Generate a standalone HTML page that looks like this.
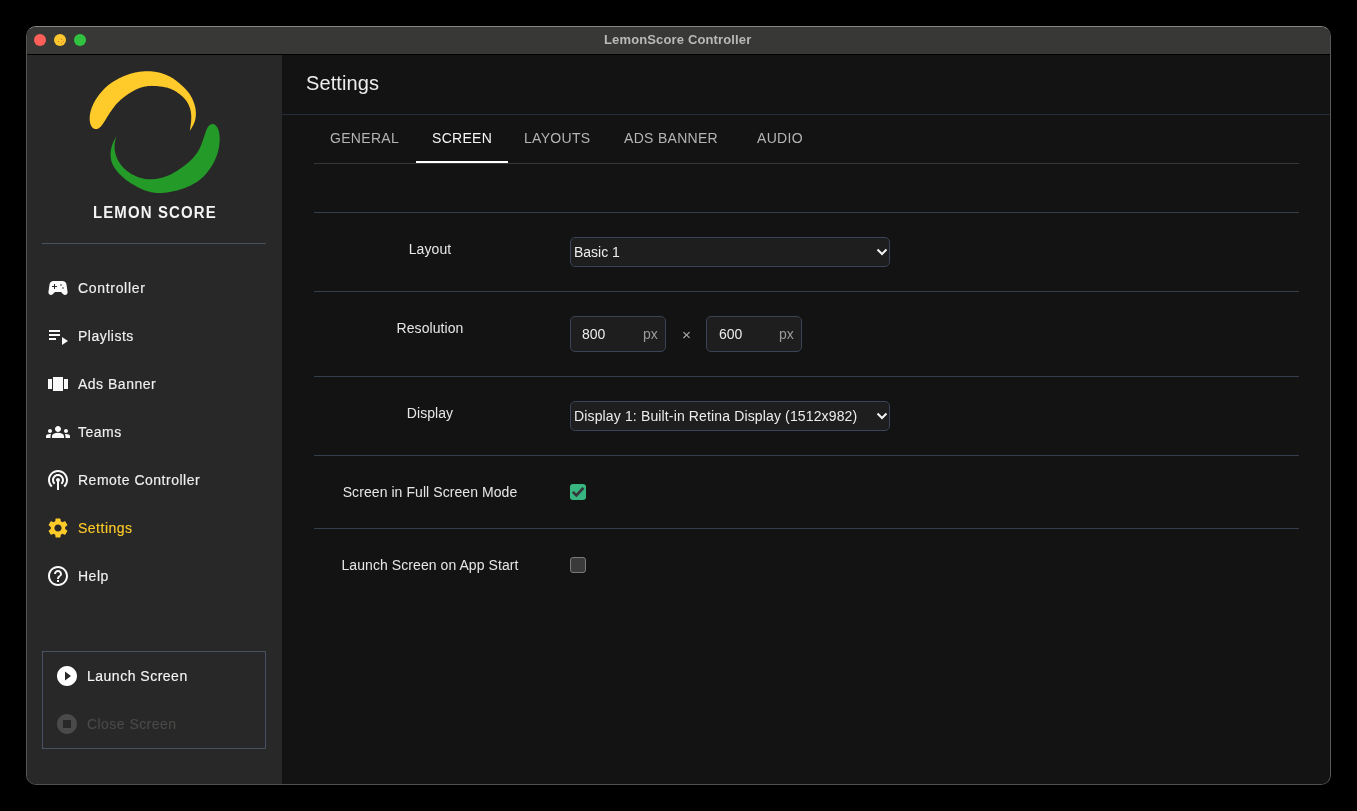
<!DOCTYPE html>
<html><head><meta charset="utf-8">
<style>
html,body{margin:0;padding:0;width:1357px;height:811px;background:#000;overflow:hidden;font-family:"Liberation Sans",sans-serif;}
.abs{position:absolute;}
#win{position:absolute;left:26px;top:26px;width:1303px;height:757px;border:1px solid #575757;border-top-color:#868686;border-bottom-color:#505050;border-radius:10px;overflow:hidden;background:#131313;}
#title{position:absolute;left:0;top:0;width:1303px;height:27px;background:#383837;border-bottom:1px solid #000;}
.dot{position:absolute;top:7px;width:12px;height:12px;border-radius:50%;}
#side{position:absolute;left:0;top:28px;width:255px;height:729px;background:#282828;}
#main{position:absolute;left:255px;top:28px;width:1048px;height:729px;background:#131313;}
.t{position:absolute;white-space:nowrap;line-height:1;will-change:transform;}
.nav{position:absolute;left:51px;font-size:14px;color:#f0f0f0;letter-spacing:0.5px;-webkit-text-stroke:0.15px currentColor;}
.ico{position:absolute;width:24px;height:24px;}
.hl{position:absolute;height:1px;}
.tab{position:absolute;top:76px;font-size:14px;color:#b4b4b4;letter-spacing:0.3px;}
.lbl{position:absolute;font-size:14px;color:#e6e6e6;text-align:center;width:300px;letter-spacing:0.07px;}
.box{position:absolute;box-sizing:border-box;border:1px solid #394456;background:#1e1e1e;border-radius:5px;}
.val{position:absolute;font-size:14px;color:#ececec;}
</style></head><body>
<div id="win">
  <div id="title">
    <div class="dot" style="left:7px;background:#fc5f5a;"></div>
    <div class="dot" style="left:27px;background:#fdc82e;"></div><div class="abs" style="left:33.5px;top:11.5px;width:1px;height:1px;background:#e86b3a;"></div><div class="abs" style="left:30.5px;top:13.5px;width:1px;height:1px;background:#e86b3a;"></div><div class="abs" style="left:35.5px;top:13.5px;width:1px;height:1px;background:#e86b3a;"></div><div class="abs" style="left:33.5px;top:15.5px;width:1px;height:1px;background:#e86b3a;"></div>
    <div class="dot" style="left:47px;background:#31c23e;"></div>
    <div class="t" style="left:576.5px;top:6px;font-size:13px;font-weight:bold;color:#b9b9b9;letter-spacing:0.14px;">LemonScore Controller</div>
  </div>
  <div id="side">
    <!-- logo -->
    <svg class="abs" style="left:0;top:0" width="255" height="200" viewBox="27 55 255 200">
      <path fill="#fecb2a" d="M189.70 131.10 L190.29 130.11 L190.82 129.26 L191.33 128.46 L191.82 127.64 L192.31 126.81 L192.78 125.94 L193.23 125.06 L193.65 124.16 L194.05 123.25 L194.41 122.32 L194.73 121.38 L195.01 120.42 L195.25 119.45 L195.45 118.48 L195.61 117.50 L195.73 116.51 L195.82 115.52 L195.87 114.52 L195.89 113.52 L195.87 112.53 L195.81 111.53 L195.72 110.54 L195.59 109.55 L195.44 108.57 L195.25 107.58 L195.04 106.61 L194.80 105.64 L194.53 104.68 L194.24 103.72 L193.92 102.78 L193.58 101.84 L193.22 100.91 L192.83 99.99 L192.43 99.07 L192.00 98.17 L191.54 97.28 L191.07 96.41 L190.56 95.54 L190.04 94.70 L189.49 93.86 L188.91 93.05 L188.31 92.25 L187.69 91.47 L187.04 90.71 L186.38 89.97 L185.70 89.23 L185.00 88.51 L184.30 87.80 L183.58 87.11 L182.86 86.42 L182.13 85.73 L181.39 85.06 L180.65 84.39 L179.90 83.73 L179.14 83.07 L178.38 82.43 L177.61 81.79 L176.82 81.17 L176.03 80.56 L175.23 79.96 L174.41 79.38 L173.59 78.82 L172.75 78.28 L171.89 77.76 L171.03 77.27 L170.15 76.79 L169.26 76.33 L168.36 75.90 L167.46 75.48 L166.54 75.08 L165.61 74.70 L164.68 74.34 L163.74 74.00 L162.80 73.68 L161.85 73.37 L160.89 73.09 L159.92 72.82 L158.96 72.58 L157.98 72.35 L157.00 72.15 L156.02 71.97 L155.04 71.81 L154.05 71.67 L153.05 71.55 L152.06 71.45 L151.06 71.37 L150.07 71.31 L149.07 71.28 L148.07 71.26 L147.07 71.26 L146.07 71.28 L145.07 71.31 L144.07 71.36 L143.07 71.43 L142.08 71.52 L141.08 71.62 L140.09 71.73 L139.10 71.87 L138.11 72.01 L137.12 72.18 L136.14 72.36 L135.16 72.56 L134.18 72.77 L133.21 73.01 L132.24 73.26 L131.28 73.53 L130.32 73.81 L129.37 74.11 L128.42 74.43 L127.48 74.76 L126.54 75.11 L125.61 75.46 L124.68 75.83 L123.75 76.22 L122.83 76.61 L121.92 77.01 L121.01 77.43 L120.10 77.85 L119.20 78.29 L118.31 78.74 L117.42 79.20 L116.54 79.67 L115.67 80.16 L114.80 80.66 L113.94 81.17 L113.09 81.70 L112.26 82.24 L111.43 82.81 L110.61 83.38 L109.81 83.98 L109.02 84.59 L108.24 85.22 L107.48 85.86 L106.72 86.52 L105.99 87.19 L105.26 87.87 L104.54 88.57 L103.84 89.28 L103.15 90.01 L102.47 90.74 L101.80 91.49 L101.15 92.24 L100.50 93.00 L99.87 93.78 L99.25 94.56 L98.64 95.36 L98.05 96.16 L97.46 96.97 L96.90 97.80 L96.35 98.63 L95.81 99.47 L95.29 100.33 L94.79 101.19 L94.31 102.07 L93.85 102.95 L93.40 103.85 L92.98 104.75 L92.57 105.66 L92.19 106.59 L91.82 107.52 L91.48 108.46 L91.17 109.40 L90.88 110.36 L90.61 111.32 L90.38 112.29 L90.18 113.27 L90.00 114.25 L89.87 115.24 L89.76 116.23 L89.70 117.22 L89.67 118.22 L89.68 119.21 L89.73 120.21 L89.83 121.19 L89.98 122.17 L90.18 123.14 L90.44 124.09 L90.78 125.00 L91.20 125.87 L91.71 126.68 L92.31 127.41 L92.99 128.04 L93.75 128.53 L94.57 128.88 L95.44 129.06 L96.33 129.07 L97.21 128.90 L98.07 128.58 L98.89 128.13 L99.65 127.56 L100.37 126.91 L101.05 126.19 L101.69 125.44 L102.30 124.65 L102.89 123.85 L103.46 123.03 L104.02 122.20 L104.57 121.36 L105.10 120.52 L105.63 119.67 L106.14 118.81 L106.66 117.95 L107.17 117.09 L107.69 116.24 L108.21 115.39 L108.74 114.54 L109.29 113.70 L109.84 112.86 L110.39 112.03 L110.96 111.21 L111.53 110.39 L112.12 109.57 L112.70 108.76 L113.30 107.96 L113.90 107.16 L114.52 106.37 L115.14 105.60 L115.78 104.83 L116.44 104.07 L117.10 103.33 L117.79 102.60 L118.49 101.88 L119.20 101.18 L119.93 100.50 L120.66 99.82 L121.42 99.16 L122.18 98.52 L122.95 97.88 L123.73 97.26 L124.52 96.65 L125.32 96.05 L126.13 95.46 L126.95 94.88 L127.77 94.31 L128.60 93.75 L129.44 93.21 L130.28 92.67 L131.13 92.15 L131.99 91.63 L132.86 91.14 L133.73 90.65 L134.62 90.19 L135.51 89.74 L136.42 89.31 L137.33 88.91 L138.25 88.53 L139.18 88.17 L140.12 87.84 L141.07 87.53 L142.03 87.25 L143.00 86.99 L143.97 86.76 L144.95 86.56 L145.93 86.38 L146.91 86.22 L147.90 86.10 L148.90 86.00 L149.89 85.93 L150.89 85.89 L151.89 85.87 L152.89 85.88 L153.89 85.91 L154.89 85.96 L155.88 86.02 L156.88 86.10 L157.88 86.20 L158.87 86.30 L159.86 86.41 L160.86 86.54 L161.85 86.67 L162.84 86.82 L163.82 86.99 L164.80 87.18 L165.78 87.38 L166.75 87.61 L167.72 87.87 L168.67 88.16 L169.61 88.48 L170.55 88.83 L171.47 89.21 L172.38 89.63 L173.27 90.07 L174.15 90.54 L175.02 91.03 L175.87 91.55 L176.71 92.09 L177.54 92.65 L178.36 93.23 L179.16 93.82 L179.95 94.43 L180.73 95.06 L181.49 95.71 L182.23 96.37 L182.96 97.05 L183.67 97.76 L184.35 98.49 L185.01 99.23 L185.64 100.01 L186.23 100.80 L186.80 101.62 L187.33 102.46 L187.83 103.33 L188.29 104.21 L188.73 105.11 L189.12 106.02 L189.49 106.95 L189.82 107.89 L190.12 108.84 L190.38 109.80 L190.60 110.77 L190.79 111.75 L190.95 112.73 L191.07 113.72 L191.16 114.72 L191.22 115.71 L191.25 116.71 L191.26 117.71 L191.24 118.71 L191.21 119.71 L191.15 120.70 L191.06 121.70 L190.96 122.69 L190.85 123.69 L190.72 124.68 L190.59 125.66 L190.45 126.62 L190.31 127.57 L190.17 128.51 L190.01 129.47 L189.82 130.51Z"/>
      <path fill="#249a28" d="M116.60 136.10 L116.03 137.10 L115.52 137.97 L115.04 138.79 L114.58 139.62 L114.13 140.47 L113.69 141.35 L113.27 142.25 L112.88 143.17 L112.51 144.10 L112.17 145.03 L111.86 145.98 L111.58 146.94 L111.34 147.91 L111.12 148.88 L110.94 149.86 L110.80 150.85 L110.69 151.84 L110.61 152.83 L110.57 153.83 L110.57 154.83 L110.60 155.82 L110.67 156.82 L110.77 157.81 L110.91 158.79 L111.09 159.77 L111.31 160.74 L111.58 161.70 L111.89 162.64 L112.25 163.57 L112.65 164.48 L113.09 165.37 L113.58 166.24 L114.09 167.09 L114.64 167.93 L115.20 168.75 L115.79 169.56 L116.40 170.35 L117.02 171.13 L117.66 171.90 L118.31 172.66 L118.98 173.41 L119.66 174.14 L120.35 174.86 L121.06 175.56 L121.78 176.26 L122.52 176.94 L123.26 177.60 L124.02 178.25 L124.79 178.89 L125.57 179.52 L126.36 180.13 L127.16 180.72 L127.98 181.31 L128.80 181.87 L129.63 182.43 L130.47 182.97 L131.32 183.50 L132.18 184.02 L133.04 184.53 L133.90 185.03 L134.77 185.53 L135.65 186.01 L136.52 186.49 L137.41 186.97 L138.29 187.43 L139.18 187.89 L140.08 188.33 L140.98 188.76 L141.89 189.18 L142.81 189.58 L143.73 189.96 L144.66 190.32 L145.60 190.66 L146.55 190.97 L147.51 191.27 L148.47 191.54 L149.43 191.79 L150.41 192.02 L151.38 192.22 L152.37 192.41 L153.35 192.57 L154.34 192.70 L155.34 192.82 L156.33 192.91 L157.33 192.97 L158.33 193.01 L159.32 193.03 L160.32 193.02 L161.32 192.99 L162.32 192.94 L163.32 192.87 L164.31 192.78 L165.31 192.68 L166.30 192.55 L167.29 192.42 L168.28 192.27 L169.27 192.10 L170.25 191.93 L171.24 191.74 L172.22 191.54 L173.20 191.34 L174.17 191.12 L175.15 190.89 L176.12 190.65 L177.09 190.40 L178.05 190.14 L179.01 189.87 L179.97 189.59 L180.93 189.29 L181.88 188.98 L182.83 188.66 L183.77 188.33 L184.71 187.98 L185.64 187.63 L186.57 187.25 L187.50 186.87 L188.41 186.47 L189.33 186.06 L190.23 185.64 L191.13 185.20 L192.03 184.75 L192.91 184.29 L193.79 183.81 L194.66 183.32 L195.52 182.81 L196.37 182.29 L197.21 181.74 L198.04 181.18 L198.85 180.60 L199.64 179.99 L200.42 179.37 L201.18 178.72 L201.93 178.06 L202.66 177.37 L203.37 176.67 L204.06 175.95 L204.74 175.22 L205.40 174.47 L206.05 173.71 L206.69 172.94 L207.32 172.16 L207.94 171.38 L208.55 170.58 L209.14 169.78 L209.73 168.97 L210.30 168.15 L210.87 167.32 L211.42 166.49 L211.95 165.64 L212.47 164.79 L212.97 163.92 L213.45 163.05 L213.92 162.16 L214.37 161.27 L214.80 160.37 L215.21 159.46 L215.61 158.54 L215.99 157.61 L216.35 156.68 L216.69 155.74 L217.02 154.80 L217.32 153.85 L217.61 152.89 L217.89 151.93 L218.14 150.96 L218.38 149.99 L218.59 149.01 L218.79 148.03 L218.97 147.05 L219.13 146.06 L219.27 145.07 L219.40 144.08 L219.50 143.09 L219.58 142.09 L219.64 141.09 L219.67 140.09 L219.68 139.10 L219.66 138.10 L219.63 137.10 L219.56 136.10 L219.47 135.11 L219.36 134.12 L219.22 133.13 L219.04 132.15 L218.82 131.18 L218.54 130.23 L218.21 129.30 L217.82 128.40 L217.35 127.54 L216.82 126.73 L216.22 125.98 L215.54 125.32 L214.81 124.76 L214.01 124.36 L213.18 124.12 L212.32 124.07 L211.47 124.22 L210.64 124.53 L209.85 125.01 L209.13 125.60 L208.47 126.29 L207.88 127.06 L207.37 127.89 L206.92 128.76 L206.52 129.66 L206.16 130.59 L205.83 131.53 L205.50 132.47 L205.18 133.42 L204.87 134.37 L204.55 135.32 L204.24 136.27 L203.92 137.22 L203.61 138.17 L203.29 139.12 L202.96 140.07 L202.63 141.01 L202.29 141.95 L201.95 142.89 L201.59 143.83 L201.23 144.76 L200.85 145.68 L200.46 146.60 L200.05 147.52 L199.62 148.42 L199.17 149.31 L198.69 150.18 L198.18 151.04 L197.65 151.89 L197.10 152.72 L196.52 153.54 L195.93 154.34 L195.32 155.13 L194.70 155.91 L194.06 156.68 L193.41 157.44 L192.74 158.19 L192.06 158.92 L191.37 159.64 L190.66 160.35 L189.94 161.04 L189.21 161.72 L188.47 162.39 L187.71 163.04 L186.94 163.68 L186.16 164.31 L185.37 164.93 L184.58 165.53 L183.78 166.13 L182.97 166.72 L182.16 167.31 L181.34 167.88 L180.52 168.46 L179.69 169.03 L178.87 169.59 L178.04 170.14 L177.20 170.69 L176.36 171.23 L175.51 171.76 L174.65 172.28 L173.79 172.78 L172.92 173.27 L172.03 173.74 L171.14 174.20 L170.24 174.63 L169.33 175.05 L168.42 175.44 L167.49 175.82 L166.56 176.18 L165.62 176.52 L164.67 176.85 L163.72 177.15 L162.77 177.44 L161.80 177.71 L160.84 177.97 L159.86 178.20 L158.89 178.41 L157.90 178.60 L156.92 178.77 L155.93 178.91 L154.94 179.03 L153.95 179.13 L152.95 179.21 L151.95 179.27 L150.95 179.30 L149.95 179.30 L148.96 179.28 L147.96 179.23 L146.96 179.15 L145.97 179.05 L144.98 178.91 L144.00 178.74 L143.02 178.55 L142.05 178.32 L141.09 178.06 L140.13 177.78 L139.18 177.46 L138.24 177.13 L137.31 176.77 L136.38 176.39 L135.47 175.98 L134.56 175.56 L133.67 175.12 L132.78 174.66 L131.90 174.18 L131.04 173.68 L130.19 173.15 L129.35 172.61 L128.53 172.05 L127.72 171.46 L126.93 170.85 L126.15 170.22 L125.39 169.57 L124.66 168.90 L123.94 168.21 L123.24 167.49 L122.57 166.76 L121.91 166.00 L121.28 165.23 L120.67 164.44 L120.09 163.63 L119.52 162.81 L118.99 161.96 L118.48 161.11 L118.00 160.23 L117.54 159.34 L117.12 158.44 L116.73 157.52 L116.38 156.59 L116.05 155.65 L115.76 154.70 L115.49 153.73 L115.26 152.76 L115.06 151.79 L114.89 150.80 L114.76 149.82 L114.66 148.82 L114.61 147.83 L114.59 146.83 L114.61 145.84 L114.66 144.84 L114.75 143.85 L114.87 142.86 L115.01 141.88 L115.18 140.91 L115.38 139.97 L115.62 139.05 L115.89 138.13 L116.21 137.18Z"/>
    </svg>
    <div class="t" style="left:65.5px;top:149.5px;font-size:15px;font-weight:bold;color:#f4f4f4;letter-spacing:1.1px;transform:scaleY(1.05);">LEMON SCORE</div>
    <div class="hl" style="left:15px;top:188px;width:224px;background:#475365;"></div>

    <!-- nav -->
    <svg class="ico" style="left:19px;top:221px" viewBox="0 0 24 24"><path fill="#fafafa" d="M21.58 16.09l-1.09-7.66C20.21 6.46 18.52 5 16.53 5H7.47C5.48 5 3.79 6.46 3.51 8.43l-1.09 7.66C2.2 17.63 3.39 19 4.94 19c.68 0 1.32-.27 1.8-.75L9 16h6l2.25 2.25c.48.48 1.13.75 1.8.75 1.56 0 2.75-1.37 2.53-2.91zM11 11H9v2H8v-2H6v-1h2V8h1v2h2v1z"/><rect x="14.1" y="8.1" width="1.8" height="1.8" fill="#8a8a8a"/><rect x="16.1" y="11.1" width="1.8" height="1.8" fill="#8a8a8a"/></svg>
    <div class="t nav" style="top:226px;letter-spacing:0.68px;">Controller</div>

    <svg class="ico" style="left:19px;top:269px" viewBox="0 0 24 24"><path fill="#fafafa" d="M3 10h11v2H3zm0-4h11v2H3zm0 8h7v2H3zm13-1v8l6-4z"/></svg>
    <div class="t nav" style="top:274px;">Playlists</div>

    <svg class="ico" style="left:19px;top:317px" viewBox="0 0 24 24"><path fill="#fafafa" d="M2 7h4v10H2V7zm5 12h10V5H7v14zM18 7h4v10h-4V7z"/></svg>
    <div class="t nav" style="top:322px;">Ads Banner</div>

    <svg class="ico" style="left:19px;top:365px" viewBox="0 0 24 24"><path fill="#fafafa" d="M12 12.75c1.63 0 3.07.39 4.240.9 1.08.48 1.76 1.56 1.76 2.73V18H6v-1.61c0-1.18.68-2.26 1.76-2.73 1.17-.52 2.61-.91 4.24-.91zM4 13c1.1 0 2-.9 2-2s-.9-2-2-2-2 .9-2 2 .9 2 2 2zm1.13 1.1c-.37-.06-.74-.1-1.130-.1-.99 0-1.930.21-2.780.58C.48 14.9 0 15.62 0 16.43V18h4.5v-1.61c0-.83.23-1.61.63-2.29zM20 13c1.1 0 2-.9 2-2s-.9-2-2-2-2 .9-2 2 .9 2 2 2zm4 3.43c0-.81-.48-1.53-1.22-1.85-.85-.37-1.79-.58-2.78-.58-.39 0-.76.04-1.13.1.4.68.63 1.46.63 2.29V18H24v-1.57zM12 6c1.66 0 3 1.34 3 3s-1.34 3-3 3-3-1.34-3-3 1.34-3 3-3z"/></svg>
    <div class="t nav" style="top:370px;">Teams</div>

    <svg class="ico" style="left:19px;top:413px" viewBox="0 0 24 24"><path fill="#fafafa" d="M14 12c0 .74-.4 1.38-1 1.72V22h-2v-8.28c-.6-.35-1-.98-1-1.72 0-1.1.9-2 2-2s2 .9 2 2zm-2-6c-3.31 0-6 2.69-6 6 0 1.740.75 3.310 1.940 4.4l1.42-1.42C8.53 14.25 8 13.19 8 12c0-2.21 1.79-4 4-4s4 1.79 4 4c0 1.19-.53 2.25-1.36 2.98l1.42 1.42C17.25 15.31 18 13.74 18 12c0-3.31-2.69-6-6-6zm0-4C6.48 2 2 6.48 2 12c0 2.85 1.2 5.41 3.11 7.24l1.42-1.42C4.98 16.36 4 14.29 4 12c0-4.41 3.59-8 8-8s8 3.59 8 8c0 2.29-.98 4.36-2.53 5.82l1.42 1.42C20.8 17.41 22 14.85 22 12c0-5.52-4.48-10-10-10z"/></svg>
    <div class="t nav" style="top:418px;">Remote Controller</div>

    <svg class="ico" style="left:19px;top:461px" viewBox="0 0 24 24"><path fill="#fecb2a" d="M19.14 12.94c.04-.3.06-.61.06-.94 0-.32-.02-.64-.07-.94l2.03-1.58c.18-.14.23-.41.12-.61l-1.92-3.32c-.12-.22-.37-.29-.59-.22l-2.39.96c-.5-.38-1.03-.7-1.62-.94l-.36-2.54c-.04-.24-.24-.41-.48-.41h-3.84c-.24 0-.43.17-.47.41l-.36 2.54c-.59.24-1.13.57-1.62.94l-2.39-.96c-.22-.08-.47 0-.59.22L2.74 8.870c-.12.21-.08.47.12.61l2.03 1.58c-.05.3-.09.63-.09.94s.02.64.07.94l-2.03 1.58c-.18.14-.23.41-.12.61l1.92 3.32c.12.22.37.29.59.22l2.39-.96c.5.38 1.03.7 1.62.94l.36 2.54c.05.24.24.41.48.41h3.84c.24 0 .44-.17.47-.41l.36-2.54c.59-.24 1.13-.56 1.62-.94l2.39.96c.22.08.47 0 .59-.22l1.92-3.32c.12-.22.07-.47-.12-.61l-2.01-1.58zM12 15.6c-1.98 0-3.6-1.62-3.6-3.6s1.62-3.6 3.6-3.6 3.6 1.62 3.6 3.6-1.62 3.6-3.6 3.6z"/></svg>
    <div class="t nav" style="top:466px;color:#fecb2a;">Settings</div>

    <svg class="ico" style="left:19px;top:509px" viewBox="0 0 24 24"><path fill="#fafafa" d="M11 18h2v-2h-2v2zm1-16C6.48 2 2 6.48 2 12s4.48 10 10 10 10-4.48 10-10S17.52 2 12 2zm0 18c-4.41 0-8-3.59-8-8s3.590-8 8-8 8 3.59 8 8-3.59 8-8 8zm0-14c-2.21 0-4 1.79-4 4h2c0-1.1.9-2 2-2s2 .9 2 2c0 2-3 1.75-3 5h2c0-2.25 3-2.5 3-5 0-2.21-1.79-4-4-4z"/></svg>
    <div class="t nav" style="top:514px;">Help</div>

    <!-- launch box -->
    <div class="abs" style="left:15px;top:596px;width:222px;height:96px;border:1px solid #465264;"></div>
    <svg class="ico" style="left:28px;top:609px" viewBox="0 0 24 24"><path fill="#ffffff" d="M12 2C6.48 2 2 6.48 2 12s4.48 10 10 10 10-4.48 10-10S17.52 2 12 2zm-2 14.5v-9l6 4.5-6 4.5z"/></svg>
    <div class="t nav" style="left:60px;top:614px;color:#f5f5f5;letter-spacing:0.5px;">Launch Screen</div>
    <svg class="ico" style="left:28px;top:657px" viewBox="0 0 24 24"><path fill="#4a4a4a" d="M12 2C6.48 2 2 6.48 2 12s4.48 10 10 10 10-4.48 10-10S17.52 2 12 2zm4 14H8V8h8v8z"/></svg>
    <div class="t nav" style="left:60px;top:662px;color:#4b4a49;letter-spacing:0.45px;">Close Screen</div>
  </div>

  <div id="main">
    <div class="t" style="left:24px;top:18px;font-size:20px;color:#ededed;letter-spacing:0.1px;">Settings</div>
    <div class="hl" style="left:0;top:59px;width:1048px;background:#242d3a;"></div>

    <div class="t tab" style="left:48px;">GENERAL</div>
    <div class="t tab" style="left:150px;color:#f5f5f5;">SCREEN</div>
    <div class="t tab" style="left:242px;">LAYOUTS</div>
    <div class="t tab" style="left:342px;">ADS BANNER</div>
    <div class="t tab" style="left:475px;">AUDIO</div>
    <div class="hl" style="left:32px;top:108px;width:985px;background:#363636;"></div>
    <div class="abs" style="left:134px;top:106px;width:92px;height:2px;background:#ffffff;"></div>

    <div class="hl" style="left:32px;top:157px;width:985px;background:#353e4c;"></div>
    <div class="t lbl" style="left:-2px;top:187px;">Layout</div>
    <div class="box" style="left:288px;top:182px;width:320px;height:30px;"></div>
    <div class="t val" style="left:292px;top:190px;">Basic 1</div>
    <svg class="abs" style="left:594px;top:193px" width="12" height="8" viewBox="0 0 12 8"><path d="M1.5 1.5 L6 6 L10.5 1.5" fill="none" stroke="#f2f2f2" stroke-width="2"/></svg>

    <div class="hl" style="left:32px;top:236px;width:985px;background:#353e4c;"></div>
    <div class="t lbl" style="left:-2px;top:266px;">Resolution</div>
    <div class="box" style="left:288px;top:261px;width:96px;height:36px;"></div>
    <div class="t val" style="left:300px;top:272px;">800</div>
    <div class="t val" style="left:361px;top:272px;color:#9b9b9b;">px</div>
    <div class="t val" style="left:400px;top:272px;font-size:15.5px;color:#a8a8a8;">×</div>
    <div class="box" style="left:424px;top:261px;width:96px;height:36px;"></div>
    <div class="t val" style="left:437px;top:272px;">600</div>
    <div class="t val" style="left:497px;top:272px;color:#9b9b9b;">px</div>

    <div class="hl" style="left:32px;top:321px;width:985px;background:#353e4c;"></div>
    <div class="t lbl" style="left:-2px;top:351px;">Display</div>
    <div class="box" style="left:288px;top:346px;width:320px;height:30px;"></div>
    <div class="t val" style="left:292px;top:354px;letter-spacing:0.14px;">Display 1: Built-in Retina Display (1512x982)</div>
    <svg class="abs" style="left:594px;top:357px" width="12" height="8" viewBox="0 0 12 8"><path d="M1.5 1.5 L6 6 L10.5 1.5" fill="none" stroke="#f2f2f2" stroke-width="2"/></svg>

    <div class="hl" style="left:32px;top:400px;width:985px;background:#353e4c;"></div>
    <div class="t lbl" style="left:-2px;top:430px;">Screen in Full Screen Mode</div>
    <div class="abs" style="left:288px;top:429px;width:16px;height:16px;border-radius:3px;background:#37b682;"></div>
    <svg class="abs" style="left:288px;top:429px" width="16" height="16" viewBox="0 0 16 16"><path d="M2.8 7.9 L6.4 11.4 L13.4 3.9" fill="none" stroke="#37333a" stroke-width="2.7"/></svg>

    <div class="hl" style="left:32px;top:473px;width:985px;background:#353e4c;"></div>
    <div class="t lbl" style="left:-2px;top:503px;">Launch Screen on App Start</div>
    <div class="abs" style="left:288px;top:502px;width:14px;height:14px;border-radius:3px;background:#3a3a3a;border:1px solid #7a7a7a;"></div>
  </div>
</div>
</body></html>
